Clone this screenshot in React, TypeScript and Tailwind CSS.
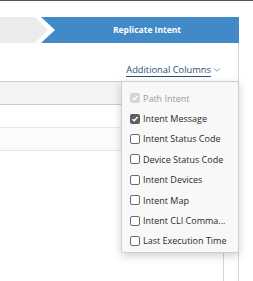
import { ChevronDown } from "lucide-react";

const FONT = "font-['Open_Sans','Liberation_Sans',sans-serif]";

const columns = [
  { label: "Path Intent", checked: true, disabled: true },
  { label: "Intent Message", checked: true },
  { label: "Intent Status Code" },
  { label: "Device Status Code" },
  { label: "Intent Devices" },
  { label: "Intent Map" },
  { label: "Intent CLI Comma..." },
  { label: "Last Execution Time" },
];

function Box({ checked, disabled }: { checked?: boolean; disabled?: boolean }) {
  if (checked) {
    return (
      <span
        className={`flex h-[10px] w-[10px] shrink-0 items-center justify-center rounded-[2px] ${
          disabled ? "bg-[#d6d6d6]" : "bg-[#5f5f5f]"
        }`}
      >
        <svg viewBox="0 0 10 10" className="h-[8px] w-[8px]">
          <path d="M1.8 5.2 L4 7.3 L8.2 2.6" fill="none" stroke="#fff" strokeWidth="1.8" />
        </svg>
      </span>
    );
  }
  return <span className="h-[10px] w-[10px] shrink-0 rounded-[2px] border border-[#6b6b6b] bg-white" />;
}

function ColumnMenu() {
  return (
    <div className="absolute left-[121px] top-[81px] h-[172px] w-[118px] rounded-[2px] border border-[#cfcfcf] bg-[#f8f8f8] pt-[6px] shadow-[0_3px_8px_rgba(0,0,0,0.18)]">
      {columns.map((c) => (
        <div key={c.label} className="flex h-[20.4px] items-center gap-[3px] pl-[8px]">
          <Box checked={c.checked} disabled={c.disabled} />
          <span className={`text-[9px] leading-none ${c.disabled ? "text-[#9a9a9a]" : "text-[#2a2a2a]"}`}>
            {c.label}
          </span>
        </div>
      ))}
    </div>
  );
}

export default function App() {
  return (
    <div className={`relative h-[281px] w-[253px] overflow-hidden bg-white ${FONT}`}>
      <div className="h-px bg-[#4c5864]" />
      {/* wizard steps */}
      <div className="mt-[16px] flex h-[26px] w-[239px]">
        <div className="h-full w-[48px] shrink-0 bg-[#ececec] [clip-path:polygon(0_0,35px_0,48px_50%,35px_100%,0_100%)]" />
        <div className="-ml-[7px] flex h-full flex-1 items-center justify-center bg-[#4189c7] pl-[14px] [clip-path:polygon(0_0,100%_0,100%_100%,0_100%,14px_50%)]">
          <span className="text-[8.5px] font-bold text-white">Replicate Intent</span>
        </div>
      </div>
      {/* panel */}
      <div className="h-[238px] w-[239px] border-r border-[#d4d4d4]">
        <div className="flex h-[38px] items-end justify-end pb-[4px] pr-[16px]">
          <span className="flex items-center gap-[1px] text-[9.3px] leading-none text-[#2b4f78]">
            <span className="border-b border-[#2b4f78] pb-[2px]">Additional Columns</span>
            <ChevronDown className="-mt-[2px] h-[10px] w-[10px] text-[#4a8fd0]" strokeWidth={2} />
          </span>
        </div>
        <div className="flex h-[200px]">
          <div className="flex-1">
            <div className="h-[24px] border-y border-[#cdcdcd] bg-[#f3f3f3]" />
            <div className="h-[23px] border-b border-[#e6e6e6]" />
            <div className="h-[23px] border-b border-[#e6e6e6] bg-[#fbfbfb]" />
          </div>
          <div className="w-[15px] border-l border-[#d4d4d4]" />
        </div>
      </div>
      <ColumnMenu />
    </div>
  );
}
